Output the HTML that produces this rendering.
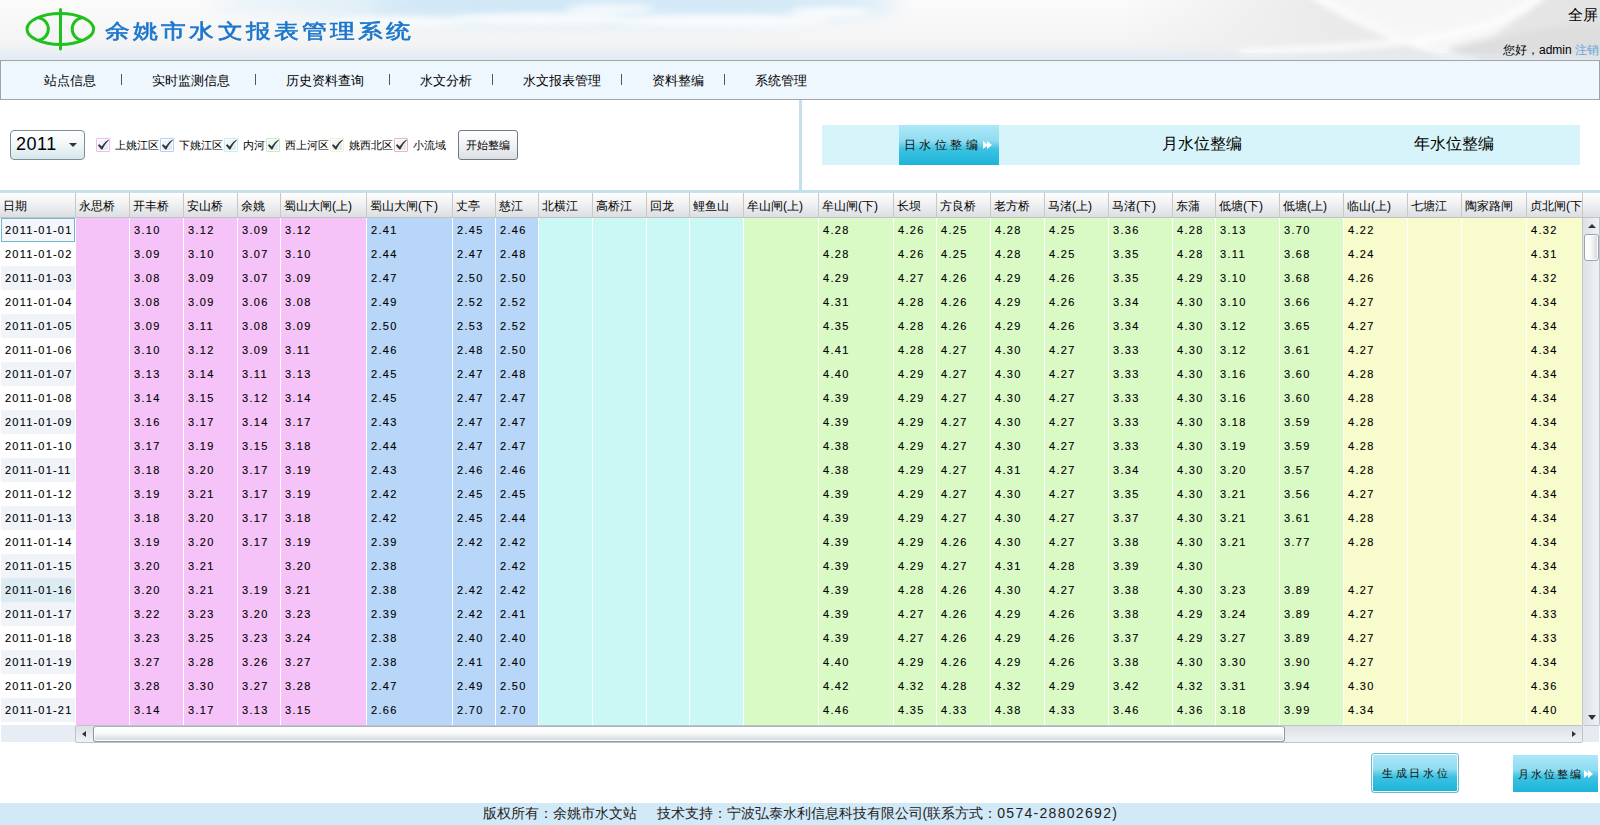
<!DOCTYPE html>
<html><head><meta charset="utf-8"><title>余姚市水文报表管理系统</title>
<style>
*{margin:0;padding:0;box-sizing:border-box}
html,body{width:1600px;height:825px;overflow:hidden;background:#fff;font-family:"Liberation Sans",sans-serif;font-size:12px;color:#000}
.abs{position:absolute}
#top{position:absolute;left:0;top:0;width:1600px;height:60px;overflow:hidden}
#logo{position:absolute;left:0;top:0}
#title{position:absolute;left:105px;top:18px;font-size:19.5px;font-weight:normal;color:#1a76cc;letter-spacing:2.7px;white-space:nowrap;line-height:26px;transform:scaleX(1.24);transform-origin:0 0;-webkit-text-stroke:0.6px #1a76cc}
#fs{position:absolute;right:2px;top:6px;font-size:14.5px;line-height:18px}
#hello{position:absolute;right:1px;top:43px;font-size:12px;line-height:14px;white-space:nowrap}
#hello span{color:#6aa6dc}
#nav{position:absolute;left:0;top:60px;width:1600px;height:40px;background:#eef6fe;border:1px solid #a4a4a4}
.ni{position:absolute;top:12px;font-size:13px;line-height:16px;white-space:nowrap}
.ns{position:absolute;top:13px;width:1px;height:11px;background:#555}
#vdiv{position:absolute;left:799px;top:100px;width:3px;height:91px;background:#c5e0ec}
#hline{position:absolute;left:0;top:190px;width:1600px;height:3px;background:#c5e0ec}
#sel{position:absolute;left:10px;top:130px;width:75px;height:30px;border:1px solid #7d8c98;border-radius:4px;background:linear-gradient(#fdfefe,#f5f9fa 40%,#d6e7ed)}
#sel .v{position:absolute;left:5px;top:3px;font-size:18px;line-height:20px;letter-spacing:0.5px}
#sel .a{position:absolute;left:58px;top:12px;width:0;height:0;border-left:4px solid transparent;border-right:4px solid transparent;border-top:4px solid #333}
.cb{position:absolute;top:138px;width:14px;height:14px;border:1px solid #ccc;border-radius:1px;background:#fff}
.cb:before{content:"";position:absolute;left:1px;top:1px;width:10px;height:10px;background:linear-gradient(135deg,#f4f7fa,#dde8f2)}
.tk{position:absolute;left:-1px;top:-1px}
.cb i{position:absolute;left:1px;top:-3px;font-style:normal;font-size:15px;line-height:16px;color:#333;font-weight:bold}
.cl{position:absolute;top:139px;font-size:11px;line-height:13px;white-space:nowrap}
#start{position:absolute;left:458px;top:130px;width:60px;height:30px;border:1px solid #6f7a86;border-radius:3px;background:linear-gradient(#fefefe,#f0f2f4 50%,#dcdfe3);font-size:11px;line-height:28px;text-align:center}
#tabs{position:absolute;left:822px;top:125px;width:758px;height:40px;background:#d6f4f9}
#tab1{position:absolute;left:77px;top:0;width:100px;height:40px;background:linear-gradient(#ade8f9,#8fdcf0 40%,#3cc2e2 60%,#1cb4d8)}
.tt{position:absolute;top:10px;font-size:16px;line-height:18px;white-space:nowrap}
.btxt{position:absolute;font-size:11px;letter-spacing:4.4px;line-height:14px;white-space:nowrap;color:#111}
.arr{position:absolute;width:0;height:0;border-top:4px solid transparent;border-bottom:4px solid transparent;border-left:5px solid #fff}
#grid{position:absolute;left:0;top:0;width:1600px;height:825px}
.cbg{position:absolute;top:218px;height:507px}
.hc{position:absolute;top:193px;height:25px;background:linear-gradient(#fefefe,#f3f3f4 40%,#dcdee2);border-right:1px solid #c8c8c8;border-bottom:1px solid #c0c2c6;padding-left:3px;padding-top:2px;line-height:22px;font-size:12px;white-space:nowrap;overflow:hidden}
#hfill{position:absolute;left:1583px;top:193px;width:17px;height:25px;background:linear-gradient(#fefefe,#f3f3f4 40%,#dcdee2);border-bottom:1px solid #c0c2c6}
.dt{position:absolute;left:1px;width:74px;height:24px;padding-left:4px;line-height:25px;font-size:11px;letter-spacing:1.2px;-webkit-text-stroke:0.12px #000}
.dt.alt{background:#f0f3f8}
.dt.sel{border:1px solid #74b6cc;background:#f3f6fa;padding-left:3px;line-height:23px}
.dt.hov{background:#dcecf2}
.cv{position:absolute;height:24px;padding-left:5px;line-height:25px;font-size:11px;letter-spacing:1.3px;-webkit-text-stroke:0.12px #000}
#datefoot{position:absolute;left:1px;top:725px;width:74px;height:17px;background:#e8ecf4}
#hsb{position:absolute;left:75px;top:725px;width:1508px;height:18px;background:linear-gradient(#dde1e6,#eff2f5);border:1px solid #bcc5cc;border-radius:2px}
#hthumb{position:absolute;left:17px;top:0;width:1192px;height:16px;border:1px solid #8d99a5;border-top-color:#aab3bc;border-radius:3px;box-shadow:inset 0 0 0 1px #fff;background:linear-gradient(#fff,#f8f9f9 45%,#d2d6da)}
#vsb{position:absolute;left:1582px;top:218px;width:18px;height:508px;background:linear-gradient(90deg,#dde1e6,#eff2f5);border:1px solid #bcc5cc;border-top:0;border-radius:0 0 2px 2px}
#vthumb{position:absolute;left:1px;top:16px;width:15px;height:27px;border:1px solid #9aa5b0;border-radius:3px;box-shadow:inset 0 0 0 1px #fff;background:linear-gradient(90deg,#fff,#f8f9f9 45%,#d2d6da)}
#corner{position:absolute;left:1583px;top:726px;width:16px;height:16px;background:#e6eaf2}
#btn1{position:absolute;left:1371px;top:753px;width:88px;height:40px;border:1px solid #6dbbd3;border-radius:3px;box-shadow:inset 0 0 0 1px #fff;background:linear-gradient(#ade8f9,#8fdcf0 40%,#3cc2e2 60%,#1cb4d8)}
#btn2{position:absolute;left:1513px;top:755px;width:85px;height:37px;background:linear-gradient(#ade8f9,#8fdcf0 40%,#3cc2e2 60%,#1cb4d8)}
#foot{position:absolute;left:0;top:803px;width:1600px;height:22px;background:#d2e9f8;text-align:center;font-size:14px;line-height:20px;color:#222;white-space:pre}

.tri{position:absolute;width:0;height:0}
.up{border-left:4px solid transparent;border-right:4px solid transparent;border-bottom:4px solid #333}
.dn{border-left:4px solid transparent;border-right:4px solid transparent;border-top:5px solid #333}
.lf{border-top:3.5px solid transparent;border-bottom:3.5px solid transparent;border-right:4.5px solid #333}
.rt{border-top:3.5px solid transparent;border-bottom:3.5px solid transparent;border-left:4.5px solid #333}

</style></head><body>
<div id="top">
<svg class="abs" style="left:0;top:0" width="1600" height="60" viewBox="0 0 1600 60">
<defs>
<linearGradient id="bgv" x1="0" y1="0" x2="0" y2="1"><stop offset="0" stop-color="#fbfbfb"/><stop offset="0.7" stop-color="#f4f4f4"/><stop offset="1" stop-color="#e4ecf6"/></linearGradient>
<linearGradient id="gr" x1="0" y1="0" x2="1" y2="0"><stop offset="0" stop-color="#ececec" stop-opacity="0"/><stop offset="0.4" stop-color="#ebebeb" stop-opacity="1"/><stop offset="1" stop-color="#e4e4e4"/></linearGradient>
<filter id="bl8" x="-50%" y="-50%" width="200%" height="200%"><feGaussianBlur stdDeviation="9"/></filter>
<filter id="bl3" x="-50%" y="-50%" width="200%" height="200%"><feGaussianBlur stdDeviation="3"/></filter>
<filter id="bl2" x="-50%" y="-50%" width="200%" height="200%"><feGaussianBlur stdDeviation="1.5"/></filter>
</defs>
<rect width="1600" height="60" fill="url(#bgv)"/>
<g filter="url(#bl8)">
<ellipse cx="580" cy="4" rx="320" ry="20" fill="#d6eaf7"/>
<ellipse cx="330" cy="2" rx="120" ry="10" fill="#e2f0f8"/>
<ellipse cx="480" cy="6" rx="110" ry="12" fill="#cfe6f6"/>
<ellipse cx="760" cy="4" rx="120" ry="13" fill="#d2e8f7"/>
</g>
<g filter="url(#bl3)" fill="#ffffff" opacity="0.8">
<ellipse cx="540" cy="19" rx="90" ry="6"/>
<ellipse cx="720" cy="21" rx="110" ry="6"/>
<ellipse cx="400" cy="22" rx="70" ry="5"/>
<ellipse cx="610" cy="9" rx="45" ry="4"/>
<ellipse cx="830" cy="12" rx="40" ry="5"/>
</g>
<rect x="1120" y="0" width="480" height="58" fill="url(#gr)"/>
<g filter="url(#bl3)">
<path d="M1305 -6 Q1390 40 1470 58 Q1500 28 1548 -6 Z" fill="#f6f6f6"/>
<path d="M1450 48 Q1520 28 1604 22 L1604 60 L1450 60 Z" fill="#dedede"/>
</g>
<g filter="url(#bl3)" fill="none" stroke="#ffffff" opacity="0.8">
<path d="M1312 -6 Q1385 40 1480 64" stroke-width="7"/>
<path d="M1544 -6 C1500 30 1440 46 1240 52" stroke-width="7"/>
</g>
<rect x="0" y="53" width="1600" height="7" fill="#e2eaf4" opacity="0.4"/>
</svg>
<svg id="logo" width="100" height="60" viewBox="0 0 100 60">
<g fill="none" stroke="#1fc21c" stroke-width="3">
<ellipse cx="60.3" cy="29" rx="33.3" ry="15.5"/>
<path d="M38.5 17.8 A11.3 11.3 0 0 1 38.5 40.2"/>
<path d="M82 17.8 A11.3 11.3 0 0 0 82 40.2"/>
<line x1="60.5" y1="9.5" x2="60.5" y2="49" stroke-linecap="round"/>
</g>
</svg>
<div id="title">余姚市水文报表管理系统</div>
<div id="fs">全屏</div>
<div id="hello">您好，admin <span>注销</span></div>
</div>
<div id="nav">
<div class="ni" style="left:43px">站点信息</div><div class="ns" style="left:120px"></div>
<div class="ni" style="left:151px">实时监测信息</div><div class="ns" style="left:254px"></div>
<div class="ni" style="left:285px">历史资料查询</div><div class="ns" style="left:388px"></div>
<div class="ni" style="left:419px">水文分析</div><div class="ns" style="left:491px"></div>
<div class="ni" style="left:522px">水文报表管理</div><div class="ns" style="left:620px"></div>
<div class="ni" style="left:651px">资料整编</div><div class="ns" style="left:723px"></div>
<div class="ni" style="left:754px">系统管理</div>
</div>
<div id="vdiv"></div>
<div id="hline"></div>
<div id="sel"><div class="v">2011</div><div class="a"></div></div>
<div class="cb" style="left:96px;border-color:#f3b9f3"><svg class="tk" width="14" height="14" viewBox="0 0 14 14"><path d="M1.8 7.2 L3.4 6.2 L5.6 8.6 Q8.5 3.5 12.6 1.4 L12.9 2.2 Q9.2 5.2 6.4 11.6 L5.4 11.6 Z" fill="#333"/></svg></div><div class="cl" style="left:115px">上姚江区</div>
<div class="cb" style="left:160px;border-color:#b3d0f3"><svg class="tk" width="14" height="14" viewBox="0 0 14 14"><path d="M1.8 7.2 L3.4 6.2 L5.6 8.6 Q8.5 3.5 12.6 1.4 L12.9 2.2 Q9.2 5.2 6.4 11.6 L5.4 11.6 Z" fill="#333"/></svg></div><div class="cl" style="left:179px">下姚江区</div>
<div class="cb" style="left:224px;border-color:#bff0f2"><svg class="tk" width="14" height="14" viewBox="0 0 14 14"><path d="M1.8 7.2 L3.4 6.2 L5.6 8.6 Q8.5 3.5 12.6 1.4 L12.9 2.2 Q9.2 5.2 6.4 11.6 L5.4 11.6 Z" fill="#333"/></svg></div><div class="cl" style="left:243px">内河</div>
<div class="cb" style="left:266px;border-color:#c0f0b2"><svg class="tk" width="14" height="14" viewBox="0 0 14 14"><path d="M1.8 7.2 L3.4 6.2 L5.6 8.6 Q8.5 3.5 12.6 1.4 L12.9 2.2 Q9.2 5.2 6.4 11.6 L5.4 11.6 Z" fill="#333"/></svg></div><div class="cl" style="left:285px">西上河区</div>
<div class="cb" style="left:330px;border-color:#f2f2c2"><svg class="tk" width="14" height="14" viewBox="0 0 14 14"><path d="M1.8 7.2 L3.4 6.2 L5.6 8.6 Q8.5 3.5 12.6 1.4 L12.9 2.2 Q9.2 5.2 6.4 11.6 L5.4 11.6 Z" fill="#333"/></svg></div><div class="cl" style="left:349px">姚西北区</div>
<div class="cb" style="left:394px;border-color:#f0b4b0"><svg class="tk" width="14" height="14" viewBox="0 0 14 14"><path d="M1.8 7.2 L3.4 6.2 L5.6 8.6 Q8.5 3.5 12.6 1.4 L12.9 2.2 Q9.2 5.2 6.4 11.6 L5.4 11.6 Z" fill="#333"/></svg></div><div class="cl" style="left:413px">小流域</div>
<div id="start">开始整编</div>
<div id="tabs">
<div id="tab1"><div class="btxt" style="left:5px;top:13px;font-size:12px;letter-spacing:3.4px">日水位整编</div><div class="arr" style="left:84px;top:16px"></div><div class="arr" style="left:88px;top:16px"></div></div>
<div class="tt" style="left:340px">月水位整编</div>
<div class="tt" style="left:592px">年水位整编</div>
</div>
<div id="grid">
<div class="cbg" style="left:76px;width:53px;background:#f5c3f8"></div>
<div class="cbg" style="left:130px;width:53px;background:#f5c3f8"></div>
<div class="cbg" style="left:184px;width:53px;background:#f5c3f8"></div>
<div class="cbg" style="left:238px;width:42px;background:#f5c3f8"></div>
<div class="cbg" style="left:281px;width:85px;background:#f5c3f8"></div>
<div class="cbg" style="left:367px;width:85px;background:#b8d7f8"></div>
<div class="cbg" style="left:453px;width:42px;background:#b8d7f8"></div>
<div class="cbg" style="left:496px;width:42px;background:#b8d7f8"></div>
<div class="cbg" style="left:539px;width:53px;background:#c9f8f5"></div>
<div class="cbg" style="left:593px;width:53px;background:#c9f8f5"></div>
<div class="cbg" style="left:647px;width:42px;background:#c9f8f5"></div>
<div class="cbg" style="left:690px;width:53px;background:#c9f8f5"></div>
<div class="cbg" style="left:744px;width:74px;background:#d9fac5"></div>
<div class="cbg" style="left:819px;width:74px;background:#d9fac5"></div>
<div class="cbg" style="left:894px;width:42px;background:#d9fac5"></div>
<div class="cbg" style="left:937px;width:53px;background:#d9fac5"></div>
<div class="cbg" style="left:991px;width:53px;background:#d9fac5"></div>
<div class="cbg" style="left:1045px;width:63px;background:#d9fac5"></div>
<div class="cbg" style="left:1109px;width:63px;background:#d9fac5"></div>
<div class="cbg" style="left:1173px;width:42px;background:#d9fac5"></div>
<div class="cbg" style="left:1216px;width:63px;background:#d9fac5"></div>
<div class="cbg" style="left:1280px;width:63px;background:#d9fac5"></div>
<div class="cbg" style="left:1344px;width:63px;background:#f8fbcb"></div>
<div class="cbg" style="left:1408px;width:53px;background:#f8fbcb"></div>
<div class="cbg" style="left:1462px;width:64px;background:#f8fbcb"></div>
<div class="cbg" style="left:1527px;width:55px;background:#f8fbcb"></div>
<div class="hc" style="left:0px;width:76px">日期</div>
<div class="hc" style="left:76px;width:54px">永思桥</div>
<div class="hc" style="left:130px;width:54px">开丰桥</div>
<div class="hc" style="left:184px;width:54px">安山桥</div>
<div class="hc" style="left:238px;width:43px">余姚</div>
<div class="hc" style="left:281px;width:86px">蜀山大闸(上)</div>
<div class="hc" style="left:367px;width:86px">蜀山大闸(下)</div>
<div class="hc" style="left:453px;width:43px">丈亭</div>
<div class="hc" style="left:496px;width:43px">慈江</div>
<div class="hc" style="left:539px;width:54px">北横江</div>
<div class="hc" style="left:593px;width:54px">高桥江</div>
<div class="hc" style="left:647px;width:43px">回龙</div>
<div class="hc" style="left:690px;width:54px">鲤鱼山</div>
<div class="hc" style="left:744px;width:75px">牟山闸(上)</div>
<div class="hc" style="left:819px;width:75px">牟山闸(下)</div>
<div class="hc" style="left:894px;width:43px">长坝</div>
<div class="hc" style="left:937px;width:54px">方良桥</div>
<div class="hc" style="left:991px;width:54px">老方桥</div>
<div class="hc" style="left:1045px;width:64px">马渚(上)</div>
<div class="hc" style="left:1109px;width:64px">马渚(下)</div>
<div class="hc" style="left:1173px;width:43px">东蒲</div>
<div class="hc" style="left:1216px;width:64px">低塘(下)</div>
<div class="hc" style="left:1280px;width:64px">低塘(上)</div>
<div class="hc" style="left:1344px;width:64px">临山(上)</div>
<div class="hc" style="left:1408px;width:54px">七塘江</div>
<div class="hc" style="left:1462px;width:65px">陶家路闸</div>
<div class="hc" style="left:1527px;width:56px">贞北闸(下)</div>
<div class="dt alt sel" style="top:218px">2011-01-01</div>
<div class="dt" style="top:242px">2011-01-02</div>
<div class="dt alt" style="top:266px">2011-01-03</div>
<div class="dt" style="top:290px">2011-01-04</div>
<div class="dt alt" style="top:314px">2011-01-05</div>
<div class="dt" style="top:338px">2011-01-06</div>
<div class="dt alt" style="top:362px">2011-01-07</div>
<div class="dt" style="top:386px">2011-01-08</div>
<div class="dt alt" style="top:410px">2011-01-09</div>
<div class="dt" style="top:434px">2011-01-10</div>
<div class="dt alt" style="top:458px">2011-01-11</div>
<div class="dt" style="top:482px">2011-01-12</div>
<div class="dt alt" style="top:506px">2011-01-13</div>
<div class="dt" style="top:530px">2011-01-14</div>
<div class="dt alt" style="top:554px">2011-01-15</div>
<div class="dt hov" style="top:578px">2011-01-16</div>
<div class="dt alt" style="top:602px">2011-01-17</div>
<div class="dt" style="top:626px">2011-01-18</div>
<div class="dt alt" style="top:650px">2011-01-19</div>
<div class="dt" style="top:674px">2011-01-20</div>
<div class="dt alt" style="top:698px">2011-01-21</div>
<div class="cv" style="left:129px;top:218px">3.10</div>
<div class="cv" style="left:183px;top:218px">3.12</div>
<div class="cv" style="left:237px;top:218px">3.09</div>
<div class="cv" style="left:280px;top:218px">3.12</div>
<div class="cv" style="left:366px;top:218px">2.41</div>
<div class="cv" style="left:452px;top:218px">2.45</div>
<div class="cv" style="left:495px;top:218px">2.46</div>
<div class="cv" style="left:818px;top:218px">4.28</div>
<div class="cv" style="left:893px;top:218px">4.26</div>
<div class="cv" style="left:936px;top:218px">4.25</div>
<div class="cv" style="left:990px;top:218px">4.28</div>
<div class="cv" style="left:1044px;top:218px">4.25</div>
<div class="cv" style="left:1108px;top:218px">3.36</div>
<div class="cv" style="left:1172px;top:218px">4.28</div>
<div class="cv" style="left:1215px;top:218px">3.13</div>
<div class="cv" style="left:1279px;top:218px">3.70</div>
<div class="cv" style="left:1343px;top:218px">4.22</div>
<div class="cv" style="left:1526px;top:218px">4.32</div>
<div class="cv" style="left:129px;top:242px">3.09</div>
<div class="cv" style="left:183px;top:242px">3.10</div>
<div class="cv" style="left:237px;top:242px">3.07</div>
<div class="cv" style="left:280px;top:242px">3.10</div>
<div class="cv" style="left:366px;top:242px">2.44</div>
<div class="cv" style="left:452px;top:242px">2.47</div>
<div class="cv" style="left:495px;top:242px">2.48</div>
<div class="cv" style="left:818px;top:242px">4.28</div>
<div class="cv" style="left:893px;top:242px">4.26</div>
<div class="cv" style="left:936px;top:242px">4.25</div>
<div class="cv" style="left:990px;top:242px">4.28</div>
<div class="cv" style="left:1044px;top:242px">4.25</div>
<div class="cv" style="left:1108px;top:242px">3.35</div>
<div class="cv" style="left:1172px;top:242px">4.28</div>
<div class="cv" style="left:1215px;top:242px">3.11</div>
<div class="cv" style="left:1279px;top:242px">3.68</div>
<div class="cv" style="left:1343px;top:242px">4.24</div>
<div class="cv" style="left:1526px;top:242px">4.31</div>
<div class="cv" style="left:129px;top:266px">3.08</div>
<div class="cv" style="left:183px;top:266px">3.09</div>
<div class="cv" style="left:237px;top:266px">3.07</div>
<div class="cv" style="left:280px;top:266px">3.09</div>
<div class="cv" style="left:366px;top:266px">2.47</div>
<div class="cv" style="left:452px;top:266px">2.50</div>
<div class="cv" style="left:495px;top:266px">2.50</div>
<div class="cv" style="left:818px;top:266px">4.29</div>
<div class="cv" style="left:893px;top:266px">4.27</div>
<div class="cv" style="left:936px;top:266px">4.26</div>
<div class="cv" style="left:990px;top:266px">4.29</div>
<div class="cv" style="left:1044px;top:266px">4.26</div>
<div class="cv" style="left:1108px;top:266px">3.35</div>
<div class="cv" style="left:1172px;top:266px">4.29</div>
<div class="cv" style="left:1215px;top:266px">3.10</div>
<div class="cv" style="left:1279px;top:266px">3.68</div>
<div class="cv" style="left:1343px;top:266px">4.26</div>
<div class="cv" style="left:1526px;top:266px">4.32</div>
<div class="cv" style="left:129px;top:290px">3.08</div>
<div class="cv" style="left:183px;top:290px">3.09</div>
<div class="cv" style="left:237px;top:290px">3.06</div>
<div class="cv" style="left:280px;top:290px">3.08</div>
<div class="cv" style="left:366px;top:290px">2.49</div>
<div class="cv" style="left:452px;top:290px">2.52</div>
<div class="cv" style="left:495px;top:290px">2.52</div>
<div class="cv" style="left:818px;top:290px">4.31</div>
<div class="cv" style="left:893px;top:290px">4.28</div>
<div class="cv" style="left:936px;top:290px">4.26</div>
<div class="cv" style="left:990px;top:290px">4.29</div>
<div class="cv" style="left:1044px;top:290px">4.26</div>
<div class="cv" style="left:1108px;top:290px">3.34</div>
<div class="cv" style="left:1172px;top:290px">4.30</div>
<div class="cv" style="left:1215px;top:290px">3.10</div>
<div class="cv" style="left:1279px;top:290px">3.66</div>
<div class="cv" style="left:1343px;top:290px">4.27</div>
<div class="cv" style="left:1526px;top:290px">4.34</div>
<div class="cv" style="left:129px;top:314px">3.09</div>
<div class="cv" style="left:183px;top:314px">3.11</div>
<div class="cv" style="left:237px;top:314px">3.08</div>
<div class="cv" style="left:280px;top:314px">3.09</div>
<div class="cv" style="left:366px;top:314px">2.50</div>
<div class="cv" style="left:452px;top:314px">2.53</div>
<div class="cv" style="left:495px;top:314px">2.52</div>
<div class="cv" style="left:818px;top:314px">4.35</div>
<div class="cv" style="left:893px;top:314px">4.28</div>
<div class="cv" style="left:936px;top:314px">4.26</div>
<div class="cv" style="left:990px;top:314px">4.29</div>
<div class="cv" style="left:1044px;top:314px">4.26</div>
<div class="cv" style="left:1108px;top:314px">3.34</div>
<div class="cv" style="left:1172px;top:314px">4.30</div>
<div class="cv" style="left:1215px;top:314px">3.12</div>
<div class="cv" style="left:1279px;top:314px">3.65</div>
<div class="cv" style="left:1343px;top:314px">4.27</div>
<div class="cv" style="left:1526px;top:314px">4.34</div>
<div class="cv" style="left:129px;top:338px">3.10</div>
<div class="cv" style="left:183px;top:338px">3.12</div>
<div class="cv" style="left:237px;top:338px">3.09</div>
<div class="cv" style="left:280px;top:338px">3.11</div>
<div class="cv" style="left:366px;top:338px">2.46</div>
<div class="cv" style="left:452px;top:338px">2.48</div>
<div class="cv" style="left:495px;top:338px">2.50</div>
<div class="cv" style="left:818px;top:338px">4.41</div>
<div class="cv" style="left:893px;top:338px">4.28</div>
<div class="cv" style="left:936px;top:338px">4.27</div>
<div class="cv" style="left:990px;top:338px">4.30</div>
<div class="cv" style="left:1044px;top:338px">4.27</div>
<div class="cv" style="left:1108px;top:338px">3.33</div>
<div class="cv" style="left:1172px;top:338px">4.30</div>
<div class="cv" style="left:1215px;top:338px">3.12</div>
<div class="cv" style="left:1279px;top:338px">3.61</div>
<div class="cv" style="left:1343px;top:338px">4.27</div>
<div class="cv" style="left:1526px;top:338px">4.34</div>
<div class="cv" style="left:129px;top:362px">3.13</div>
<div class="cv" style="left:183px;top:362px">3.14</div>
<div class="cv" style="left:237px;top:362px">3.11</div>
<div class="cv" style="left:280px;top:362px">3.13</div>
<div class="cv" style="left:366px;top:362px">2.45</div>
<div class="cv" style="left:452px;top:362px">2.47</div>
<div class="cv" style="left:495px;top:362px">2.48</div>
<div class="cv" style="left:818px;top:362px">4.40</div>
<div class="cv" style="left:893px;top:362px">4.29</div>
<div class="cv" style="left:936px;top:362px">4.27</div>
<div class="cv" style="left:990px;top:362px">4.30</div>
<div class="cv" style="left:1044px;top:362px">4.27</div>
<div class="cv" style="left:1108px;top:362px">3.33</div>
<div class="cv" style="left:1172px;top:362px">4.30</div>
<div class="cv" style="left:1215px;top:362px">3.16</div>
<div class="cv" style="left:1279px;top:362px">3.60</div>
<div class="cv" style="left:1343px;top:362px">4.28</div>
<div class="cv" style="left:1526px;top:362px">4.34</div>
<div class="cv" style="left:129px;top:386px">3.14</div>
<div class="cv" style="left:183px;top:386px">3.15</div>
<div class="cv" style="left:237px;top:386px">3.12</div>
<div class="cv" style="left:280px;top:386px">3.14</div>
<div class="cv" style="left:366px;top:386px">2.45</div>
<div class="cv" style="left:452px;top:386px">2.47</div>
<div class="cv" style="left:495px;top:386px">2.47</div>
<div class="cv" style="left:818px;top:386px">4.39</div>
<div class="cv" style="left:893px;top:386px">4.29</div>
<div class="cv" style="left:936px;top:386px">4.27</div>
<div class="cv" style="left:990px;top:386px">4.30</div>
<div class="cv" style="left:1044px;top:386px">4.27</div>
<div class="cv" style="left:1108px;top:386px">3.33</div>
<div class="cv" style="left:1172px;top:386px">4.30</div>
<div class="cv" style="left:1215px;top:386px">3.16</div>
<div class="cv" style="left:1279px;top:386px">3.60</div>
<div class="cv" style="left:1343px;top:386px">4.28</div>
<div class="cv" style="left:1526px;top:386px">4.34</div>
<div class="cv" style="left:129px;top:410px">3.16</div>
<div class="cv" style="left:183px;top:410px">3.17</div>
<div class="cv" style="left:237px;top:410px">3.14</div>
<div class="cv" style="left:280px;top:410px">3.17</div>
<div class="cv" style="left:366px;top:410px">2.43</div>
<div class="cv" style="left:452px;top:410px">2.47</div>
<div class="cv" style="left:495px;top:410px">2.47</div>
<div class="cv" style="left:818px;top:410px">4.39</div>
<div class="cv" style="left:893px;top:410px">4.29</div>
<div class="cv" style="left:936px;top:410px">4.27</div>
<div class="cv" style="left:990px;top:410px">4.30</div>
<div class="cv" style="left:1044px;top:410px">4.27</div>
<div class="cv" style="left:1108px;top:410px">3.33</div>
<div class="cv" style="left:1172px;top:410px">4.30</div>
<div class="cv" style="left:1215px;top:410px">3.18</div>
<div class="cv" style="left:1279px;top:410px">3.59</div>
<div class="cv" style="left:1343px;top:410px">4.28</div>
<div class="cv" style="left:1526px;top:410px">4.34</div>
<div class="cv" style="left:129px;top:434px">3.17</div>
<div class="cv" style="left:183px;top:434px">3.19</div>
<div class="cv" style="left:237px;top:434px">3.15</div>
<div class="cv" style="left:280px;top:434px">3.18</div>
<div class="cv" style="left:366px;top:434px">2.44</div>
<div class="cv" style="left:452px;top:434px">2.47</div>
<div class="cv" style="left:495px;top:434px">2.47</div>
<div class="cv" style="left:818px;top:434px">4.38</div>
<div class="cv" style="left:893px;top:434px">4.29</div>
<div class="cv" style="left:936px;top:434px">4.27</div>
<div class="cv" style="left:990px;top:434px">4.30</div>
<div class="cv" style="left:1044px;top:434px">4.27</div>
<div class="cv" style="left:1108px;top:434px">3.33</div>
<div class="cv" style="left:1172px;top:434px">4.30</div>
<div class="cv" style="left:1215px;top:434px">3.19</div>
<div class="cv" style="left:1279px;top:434px">3.59</div>
<div class="cv" style="left:1343px;top:434px">4.28</div>
<div class="cv" style="left:1526px;top:434px">4.34</div>
<div class="cv" style="left:129px;top:458px">3.18</div>
<div class="cv" style="left:183px;top:458px">3.20</div>
<div class="cv" style="left:237px;top:458px">3.17</div>
<div class="cv" style="left:280px;top:458px">3.19</div>
<div class="cv" style="left:366px;top:458px">2.43</div>
<div class="cv" style="left:452px;top:458px">2.46</div>
<div class="cv" style="left:495px;top:458px">2.46</div>
<div class="cv" style="left:818px;top:458px">4.38</div>
<div class="cv" style="left:893px;top:458px">4.29</div>
<div class="cv" style="left:936px;top:458px">4.27</div>
<div class="cv" style="left:990px;top:458px">4.31</div>
<div class="cv" style="left:1044px;top:458px">4.27</div>
<div class="cv" style="left:1108px;top:458px">3.34</div>
<div class="cv" style="left:1172px;top:458px">4.30</div>
<div class="cv" style="left:1215px;top:458px">3.20</div>
<div class="cv" style="left:1279px;top:458px">3.57</div>
<div class="cv" style="left:1343px;top:458px">4.28</div>
<div class="cv" style="left:1526px;top:458px">4.34</div>
<div class="cv" style="left:129px;top:482px">3.19</div>
<div class="cv" style="left:183px;top:482px">3.21</div>
<div class="cv" style="left:237px;top:482px">3.17</div>
<div class="cv" style="left:280px;top:482px">3.19</div>
<div class="cv" style="left:366px;top:482px">2.42</div>
<div class="cv" style="left:452px;top:482px">2.45</div>
<div class="cv" style="left:495px;top:482px">2.45</div>
<div class="cv" style="left:818px;top:482px">4.39</div>
<div class="cv" style="left:893px;top:482px">4.29</div>
<div class="cv" style="left:936px;top:482px">4.27</div>
<div class="cv" style="left:990px;top:482px">4.30</div>
<div class="cv" style="left:1044px;top:482px">4.27</div>
<div class="cv" style="left:1108px;top:482px">3.35</div>
<div class="cv" style="left:1172px;top:482px">4.30</div>
<div class="cv" style="left:1215px;top:482px">3.21</div>
<div class="cv" style="left:1279px;top:482px">3.56</div>
<div class="cv" style="left:1343px;top:482px">4.27</div>
<div class="cv" style="left:1526px;top:482px">4.34</div>
<div class="cv" style="left:129px;top:506px">3.18</div>
<div class="cv" style="left:183px;top:506px">3.20</div>
<div class="cv" style="left:237px;top:506px">3.17</div>
<div class="cv" style="left:280px;top:506px">3.18</div>
<div class="cv" style="left:366px;top:506px">2.42</div>
<div class="cv" style="left:452px;top:506px">2.45</div>
<div class="cv" style="left:495px;top:506px">2.44</div>
<div class="cv" style="left:818px;top:506px">4.39</div>
<div class="cv" style="left:893px;top:506px">4.29</div>
<div class="cv" style="left:936px;top:506px">4.27</div>
<div class="cv" style="left:990px;top:506px">4.30</div>
<div class="cv" style="left:1044px;top:506px">4.27</div>
<div class="cv" style="left:1108px;top:506px">3.37</div>
<div class="cv" style="left:1172px;top:506px">4.30</div>
<div class="cv" style="left:1215px;top:506px">3.21</div>
<div class="cv" style="left:1279px;top:506px">3.61</div>
<div class="cv" style="left:1343px;top:506px">4.28</div>
<div class="cv" style="left:1526px;top:506px">4.34</div>
<div class="cv" style="left:129px;top:530px">3.19</div>
<div class="cv" style="left:183px;top:530px">3.20</div>
<div class="cv" style="left:237px;top:530px">3.17</div>
<div class="cv" style="left:280px;top:530px">3.19</div>
<div class="cv" style="left:366px;top:530px">2.39</div>
<div class="cv" style="left:452px;top:530px">2.42</div>
<div class="cv" style="left:495px;top:530px">2.42</div>
<div class="cv" style="left:818px;top:530px">4.39</div>
<div class="cv" style="left:893px;top:530px">4.29</div>
<div class="cv" style="left:936px;top:530px">4.26</div>
<div class="cv" style="left:990px;top:530px">4.30</div>
<div class="cv" style="left:1044px;top:530px">4.27</div>
<div class="cv" style="left:1108px;top:530px">3.38</div>
<div class="cv" style="left:1172px;top:530px">4.30</div>
<div class="cv" style="left:1215px;top:530px">3.21</div>
<div class="cv" style="left:1279px;top:530px">3.77</div>
<div class="cv" style="left:1343px;top:530px">4.28</div>
<div class="cv" style="left:1526px;top:530px">4.34</div>
<div class="cv" style="left:129px;top:554px">3.20</div>
<div class="cv" style="left:183px;top:554px">3.21</div>
<div class="cv" style="left:280px;top:554px">3.20</div>
<div class="cv" style="left:366px;top:554px">2.38</div>
<div class="cv" style="left:495px;top:554px">2.42</div>
<div class="cv" style="left:818px;top:554px">4.39</div>
<div class="cv" style="left:893px;top:554px">4.29</div>
<div class="cv" style="left:936px;top:554px">4.27</div>
<div class="cv" style="left:990px;top:554px">4.31</div>
<div class="cv" style="left:1044px;top:554px">4.28</div>
<div class="cv" style="left:1108px;top:554px">3.39</div>
<div class="cv" style="left:1172px;top:554px">4.30</div>
<div class="cv" style="left:1526px;top:554px">4.34</div>
<div class="cv" style="left:129px;top:578px">3.20</div>
<div class="cv" style="left:183px;top:578px">3.21</div>
<div class="cv" style="left:237px;top:578px">3.19</div>
<div class="cv" style="left:280px;top:578px">3.21</div>
<div class="cv" style="left:366px;top:578px">2.38</div>
<div class="cv" style="left:452px;top:578px">2.42</div>
<div class="cv" style="left:495px;top:578px">2.42</div>
<div class="cv" style="left:818px;top:578px">4.39</div>
<div class="cv" style="left:893px;top:578px">4.28</div>
<div class="cv" style="left:936px;top:578px">4.26</div>
<div class="cv" style="left:990px;top:578px">4.30</div>
<div class="cv" style="left:1044px;top:578px">4.27</div>
<div class="cv" style="left:1108px;top:578px">3.38</div>
<div class="cv" style="left:1172px;top:578px">4.30</div>
<div class="cv" style="left:1215px;top:578px">3.23</div>
<div class="cv" style="left:1279px;top:578px">3.89</div>
<div class="cv" style="left:1343px;top:578px">4.27</div>
<div class="cv" style="left:1526px;top:578px">4.34</div>
<div class="cv" style="left:129px;top:602px">3.22</div>
<div class="cv" style="left:183px;top:602px">3.23</div>
<div class="cv" style="left:237px;top:602px">3.20</div>
<div class="cv" style="left:280px;top:602px">3.23</div>
<div class="cv" style="left:366px;top:602px">2.39</div>
<div class="cv" style="left:452px;top:602px">2.42</div>
<div class="cv" style="left:495px;top:602px">2.41</div>
<div class="cv" style="left:818px;top:602px">4.39</div>
<div class="cv" style="left:893px;top:602px">4.27</div>
<div class="cv" style="left:936px;top:602px">4.26</div>
<div class="cv" style="left:990px;top:602px">4.29</div>
<div class="cv" style="left:1044px;top:602px">4.26</div>
<div class="cv" style="left:1108px;top:602px">3.38</div>
<div class="cv" style="left:1172px;top:602px">4.29</div>
<div class="cv" style="left:1215px;top:602px">3.24</div>
<div class="cv" style="left:1279px;top:602px">3.89</div>
<div class="cv" style="left:1343px;top:602px">4.27</div>
<div class="cv" style="left:1526px;top:602px">4.33</div>
<div class="cv" style="left:129px;top:626px">3.23</div>
<div class="cv" style="left:183px;top:626px">3.25</div>
<div class="cv" style="left:237px;top:626px">3.23</div>
<div class="cv" style="left:280px;top:626px">3.24</div>
<div class="cv" style="left:366px;top:626px">2.38</div>
<div class="cv" style="left:452px;top:626px">2.40</div>
<div class="cv" style="left:495px;top:626px">2.40</div>
<div class="cv" style="left:818px;top:626px">4.39</div>
<div class="cv" style="left:893px;top:626px">4.27</div>
<div class="cv" style="left:936px;top:626px">4.26</div>
<div class="cv" style="left:990px;top:626px">4.29</div>
<div class="cv" style="left:1044px;top:626px">4.26</div>
<div class="cv" style="left:1108px;top:626px">3.37</div>
<div class="cv" style="left:1172px;top:626px">4.29</div>
<div class="cv" style="left:1215px;top:626px">3.27</div>
<div class="cv" style="left:1279px;top:626px">3.89</div>
<div class="cv" style="left:1343px;top:626px">4.27</div>
<div class="cv" style="left:1526px;top:626px">4.33</div>
<div class="cv" style="left:129px;top:650px">3.27</div>
<div class="cv" style="left:183px;top:650px">3.28</div>
<div class="cv" style="left:237px;top:650px">3.26</div>
<div class="cv" style="left:280px;top:650px">3.27</div>
<div class="cv" style="left:366px;top:650px">2.38</div>
<div class="cv" style="left:452px;top:650px">2.41</div>
<div class="cv" style="left:495px;top:650px">2.40</div>
<div class="cv" style="left:818px;top:650px">4.40</div>
<div class="cv" style="left:893px;top:650px">4.29</div>
<div class="cv" style="left:936px;top:650px">4.26</div>
<div class="cv" style="left:990px;top:650px">4.29</div>
<div class="cv" style="left:1044px;top:650px">4.26</div>
<div class="cv" style="left:1108px;top:650px">3.38</div>
<div class="cv" style="left:1172px;top:650px">4.30</div>
<div class="cv" style="left:1215px;top:650px">3.30</div>
<div class="cv" style="left:1279px;top:650px">3.90</div>
<div class="cv" style="left:1343px;top:650px">4.27</div>
<div class="cv" style="left:1526px;top:650px">4.34</div>
<div class="cv" style="left:129px;top:674px">3.28</div>
<div class="cv" style="left:183px;top:674px">3.30</div>
<div class="cv" style="left:237px;top:674px">3.27</div>
<div class="cv" style="left:280px;top:674px">3.28</div>
<div class="cv" style="left:366px;top:674px">2.47</div>
<div class="cv" style="left:452px;top:674px">2.49</div>
<div class="cv" style="left:495px;top:674px">2.50</div>
<div class="cv" style="left:818px;top:674px">4.42</div>
<div class="cv" style="left:893px;top:674px">4.32</div>
<div class="cv" style="left:936px;top:674px">4.28</div>
<div class="cv" style="left:990px;top:674px">4.32</div>
<div class="cv" style="left:1044px;top:674px">4.29</div>
<div class="cv" style="left:1108px;top:674px">3.42</div>
<div class="cv" style="left:1172px;top:674px">4.32</div>
<div class="cv" style="left:1215px;top:674px">3.31</div>
<div class="cv" style="left:1279px;top:674px">3.94</div>
<div class="cv" style="left:1343px;top:674px">4.30</div>
<div class="cv" style="left:1526px;top:674px">4.36</div>
<div class="cv" style="left:129px;top:698px">3.14</div>
<div class="cv" style="left:183px;top:698px">3.17</div>
<div class="cv" style="left:237px;top:698px">3.13</div>
<div class="cv" style="left:280px;top:698px">3.15</div>
<div class="cv" style="left:366px;top:698px">2.66</div>
<div class="cv" style="left:452px;top:698px">2.70</div>
<div class="cv" style="left:495px;top:698px">2.70</div>
<div class="cv" style="left:818px;top:698px">4.46</div>
<div class="cv" style="left:893px;top:698px">4.35</div>
<div class="cv" style="left:936px;top:698px">4.33</div>
<div class="cv" style="left:990px;top:698px">4.38</div>
<div class="cv" style="left:1044px;top:698px">4.33</div>
<div class="cv" style="left:1108px;top:698px">3.46</div>
<div class="cv" style="left:1172px;top:698px">4.36</div>
<div class="cv" style="left:1215px;top:698px">3.18</div>
<div class="cv" style="left:1279px;top:698px">3.99</div>
<div class="cv" style="left:1343px;top:698px">4.34</div>
<div class="cv" style="left:1526px;top:698px">4.40</div>
<div id="hfill"></div>
<div id="vsb"><div id="vthumb"></div><div class="tri up" style="left:5px;top:6px"></div><div class="tri dn" style="left:5px;top:497px"></div></div>
<div id="datefoot"></div>
<div id="hsb"><div class="tri lf" style="left:6px;top:5px"></div><div id="hthumb"></div><div class="tri rt" style="left:1496px;top:5px"></div></div>
<div id="corner"></div>
</div>
<div id="btn1"><div class="btxt" style="left:10px;top:12px;letter-spacing:2.7px">生成日水位</div></div>
<div id="btn2"><div class="btxt" style="left:5px;top:12px;letter-spacing:2.1px">月水位整编</div><div class="arr" style="left:71px;top:15px"></div><div class="arr" style="left:75px;top:15px"></div></div>
<div id="foot">版权所有：余姚市水文站     技术支持：宁波弘泰水利信息科技有限公司(联系方式：<span style="letter-spacing:1.3px">0574-28802692</span>)</div>

</body></html>
